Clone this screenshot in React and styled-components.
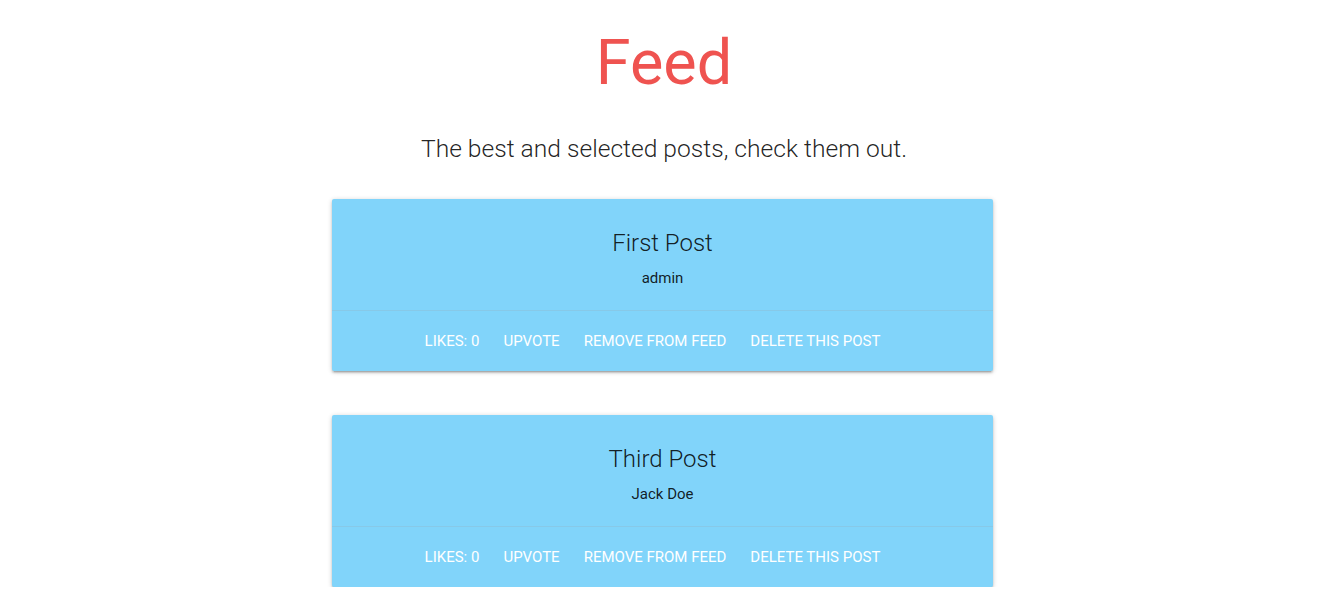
import React from "react";
import styled, { createGlobalStyle } from "styled-components";

const Global = createGlobalStyle`
  html { font-size: 15px; }
  html, body { margin: 0; padding: 0; background: #fff; }
  body {
    font-family: Roboto, "Noto Sans", sans-serif;
    color: rgba(0,0,0,0.87);
    -webkit-font-smoothing: antialiased;
  }
`;

const Page = styled.main`
  display: flex;
  flex-direction: column;
  align-items: center;
  padding-top: 28px;
`;

const Title = styled.h1`
  margin: 0;
  font-size: 63px;
  font-weight: 400;
  line-height: 69px;
  color: #ef5350;
`;

const Subtitle = styled.h5`
  margin: 38px 0 37px;
  font-size: 24.6px;
  font-weight: 300;
  line-height: 27px;
  color: rgba(0,0,0,0.87);
`;

const List = styled.div`
  display: flex;
  flex-direction: column;
  gap: 44px;
  width: 661px;
  margin-left: -3px;
`;

const Card = styled.article`
  background: #81d4fa;
  border-radius: 2px;
  box-shadow: 0 2px 2px 0 rgba(0,0,0,.14), 0 3px 1px -2px rgba(0,0,0,.12), 0 1px 5px 0 rgba(0,0,0,.2);
  text-align: center;
`;

const Content = styled.div`
  padding: 24px 24px 20px;
`;

const PostTitle = styled.h2`
  margin: 0 0 3px;
  font-size: 24px;
  font-weight: 300;
  line-height: 40px;
  color: rgba(0,0,0,0.87);
`;

const Author = styled.p`
  margin: 0;
  font-size: 15px;
  line-height: 24px;
  color: rgba(0,0,0,0.87);
`;

const Actions = styled.div`
  border-top: 1px solid rgba(160,160,160,0.2);
  padding: 19px 0 19px 4px;
  display: flex;
  justify-content: center;
`;

const Action = styled.a`
  margin-right: 24px;
  font-size: 15px;
  line-height: 22px;
  text-transform: uppercase;
  color: #fff;
  text-decoration: none;
  cursor: pointer;
`;

const posts = [
  { title: "First Post", author: "admin" },
  { title: "Third Post", author: "Jack Doe" },
];

export default function App() {
  return (
    <>
      <Global />
      <Page>
        <Title>Feed</Title>
        <Subtitle>The best and selected posts, check them out.</Subtitle>
        <List>
          {posts.map((p) => (
            <Card key={p.title}>
              <Content>
                <PostTitle>{p.title}</PostTitle>
                <Author>{p.author}</Author>
              </Content>
              <Actions>
                <Action>Likes: 0</Action>
                <Action>Upvote</Action>
                <Action>Remove from feed</Action>
                <Action>Delete this post</Action>
              </Actions>
            </Card>
          ))}
        </List>
      </Page>
    </>
  );
}
